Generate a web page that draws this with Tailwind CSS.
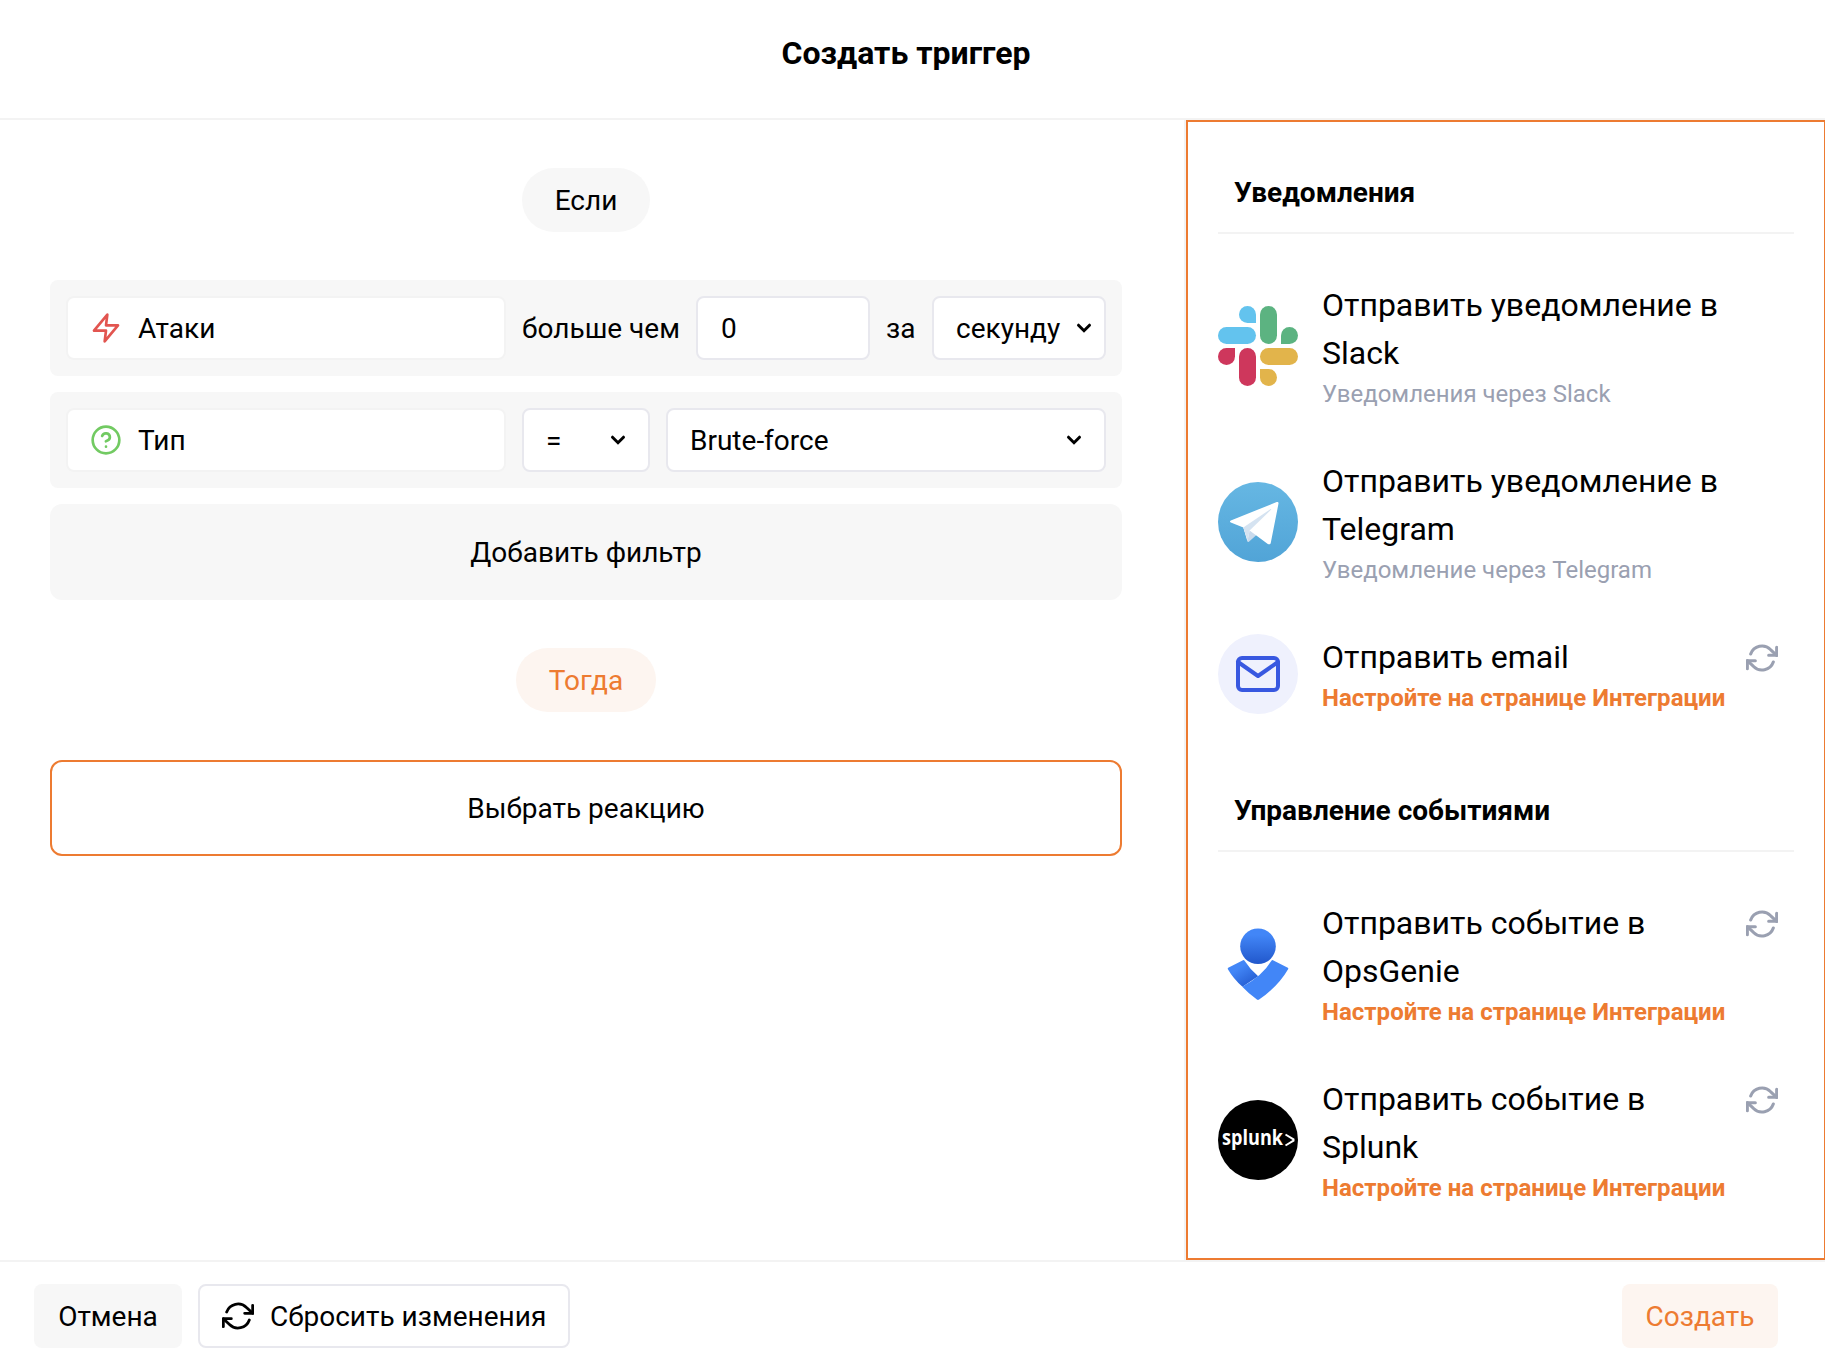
<!DOCTYPE html>
<html lang="ru">
<head>
<meta charset="utf-8">
<title>Создать триггер</title>
<script src="https://cdn.jsdelivr.net/npm/@tailwindcss/browser@4"></script>
</head>
<body class="bg-white">
<svg class="hidden">
  <symbol id="refresh" viewBox="0 0 24 24"><g fill="none" stroke="currentColor" stroke-linecap="round" stroke-linejoin="round"><path d="M23 4v6h-6M1 20v-6h6"/><path d="M3.51 9a9 9 0 0 1 14.85-3.36L23 10M1 14l4.64 4.36A9 9 0 0 0 20.49 15"/></g></symbol>
  <symbol id="chevron" viewBox="0 0 16 10"><path d="M2.5 2.2 8 7.7l5.500-5.500" fill="none" stroke="currentColor" stroke-width="3" stroke-linecap="round" stroke-linejoin="miter"/></symbol>
</svg>
<div class="flex h-[1364px] w-[1825px] flex-col overflow-hidden bg-white font-[Roboto,sans-serif] text-[28px] leading-[40px] text-black">
  <header class="flex h-[120px] shrink-0 items-start justify-center border-b-2 border-[#f3f3f3] pt-[33px] pr-[13px]">
    <h1 class="text-[32px] leading-[40px] font-bold">Создать триггер</h1>
  </header>

  <div class="flex h-[1140px] shrink-0">
    <main class="flex w-[1186px] shrink-0 flex-col items-center border-r-2 border-[#f3f3f3] pt-12 pr-[62px] pl-[50px]">
      <div class="flex h-16 w-32 items-center justify-center rounded-full bg-[#f7f7f7] pt-0.5">Если</div>

      <section class="mt-12 flex w-full flex-col gap-4">
        <div class="flex h-24 items-center gap-4 rounded-lg bg-[#f7f7f7] px-4">
          <div class="flex h-16 w-[440px] shrink-0 items-center gap-4 rounded-lg border-2 border-[#f3f3f3] bg-white px-[22px]">
            <svg class="size-8 text-[#e25550]" viewBox="0 0 24 24" fill="none" stroke="currentColor" stroke-width="2" stroke-linecap="round" stroke-linejoin="round"><path d="M13 2 3 14h9l-1 8 10-12h-9z"/></svg>
            <span class="pt-0.5">Атаки</span>
          </div>
          <span class="grow pt-0.5 whitespace-nowrap">больше чем</span>
          <div class="flex h-16 w-[174px] shrink-0 items-center rounded-lg border-2 border-[#e8e8ee] bg-white px-[23px] pt-0.5">0</div>
          <span class="w-[30px] shrink-0 pt-0.5">за</span>
          <div class="flex h-16 w-[174px] shrink-0 items-center justify-between rounded-lg border-2 border-[#e8e8ee] bg-white pr-3 pl-[22px]">
            <span class="pt-0.5">секунду</span><svg class="h-[10px] w-4"><use href="#chevron"/></svg>
          </div>
        </div>

        <div class="flex h-24 items-center gap-4 rounded-lg bg-[#f7f7f7] px-4">
          <div class="flex h-16 w-[440px] shrink-0 items-center gap-4 rounded-lg border-2 border-[#f3f3f3] bg-white px-[22px]">
            <svg class="size-8 text-[#72ca62]" viewBox="0 0 24 24" fill="none" stroke="currentColor" stroke-width="2" stroke-linecap="round" stroke-linejoin="round"><circle cx="12" cy="12" r="10"/><path d="M9.090 9a3 3 0 0 1 5.830 1c0 2-3 3-3 3M12 17h.01"/></svg>
            <span class="pt-0.5">Тип</span>
          </div>
          <div class="flex h-16 w-32 shrink-0 items-center justify-between rounded-lg border-2 border-[#e8e8ee] bg-white px-[22px]">
            <span class="pt-0.5">=</span><svg class="h-[10px] w-4"><use href="#chevron"/></svg>
          </div>
          <div class="flex h-16 w-[440px] shrink-0 items-center justify-between rounded-lg border-2 border-[#e8e8ee] bg-white px-[22px]">
            <span class="pt-0.5">Brute-force</span><svg class="h-[10px] w-4"><use href="#chevron"/></svg>
          </div>
        </div>

        <button class="h-24 rounded-xl bg-[#f7f7f7] pt-0.5">Добавить фильтр</button>
      </section>

      <div class="mt-12 flex h-16 w-[140px] items-center justify-center rounded-full bg-[#fdf5f0] pt-0.5 text-[#ed7b31]">Тогда</div>
      <button class="mt-12 h-24 w-full rounded-xl border-2 border-[#ed7b31] pt-0.5">Выбрать реакцию</button>
    </main>

    <aside class="w-[640px] shrink-0 border-2 border-[#ed7b31] px-[30px]">
      <h2 class="flex h-28 items-end border-b-2 border-[#f3f3f3] px-4 pb-[19px] font-bold">Уведомления</h2>
      <ul class="mt-[46px] flex flex-col gap-11">
        <li class="flex items-center">
          <svg class="size-20 shrink-0" viewBox="0 0 80 80">
            <g fill="#63c3ee"><path d="M29.500 0a8.500 8.500 0 0 1 8.500 8.500V17h-8.500a8.500 8.500 0 0 1 0-17z"/><rect y="21" width="38" height="17" rx="8.500"/></g>
            <g fill="#5cb381"><rect x="42" width="17" height="38" rx="8.500"/><path d="M63 38v-8.500a8.500 8.500 0 1 1 8.500 8.500z"/></g>
            <g fill="#ce375c"><path d="M17 42v8.500A8.500 8.500 0 1 1 8.500 42z"/><rect x="21" y="42" width="17" height="38" rx="8.500"/></g>
            <g fill="#e2b44b"><rect x="42" y="42" width="38" height="17" rx="8.500"/><path d="M42 63h8.500a8.500 8.500 0 1 1-8.500 8.500z"/></g>
          </svg>
          <div class="ml-6 w-[420px]">
            <div class="-mb-px pt-px text-[32px] leading-[48px]">Отправить уведомление в Slack</div>
            <div class="text-2xl leading-9 text-[#9aa0b1]">Уведомления через Slack</div>
          </div>
        </li>
        <li class="flex items-center">
          <svg class="size-20 shrink-0" viewBox="0 0 80 80">
            <defs><linearGradient id="tg" x1="0" y1="0" x2="0" y2="1"><stop stop-color="#66b7e3"/><stop offset="1" stop-color="#51a4d7"/></linearGradient></defs>
            <circle cx="40" cy="40" r="40" fill="url(#tg)"/>
            <path d="m25.300 45 4 14.300c.2.800 1 .9 1.600.4L38.500 53 33 47z" fill="#c9daec"/>
            <path d="M12.800 38.600 58.700 20c1.200-.4 2 .3 1.800 1.600L52.800 60.800c-.3 1.600-1.700 2-3 1.100L31.600 48.500l-2.100 10.300-4.200-13.300-12.500-5c-1.100-.5-1.100-1.400 0-1.900z" fill="#fff"/>
            <path d="m25.300 45.500 27.400-18.400c.5-.2.700.2.300.6L31.600 48.500l-1.900 10.300z" fill="#d5e3f1"/>
          </svg>
          <div class="ml-6 w-[420px]">
            <div class="-mb-px pt-px text-[32px] leading-[48px]">Отправить уведомление в Telegram</div>
            <div class="text-2xl leading-9 text-[#9aa0b1]">Уведомление через Telegram</div>
          </div>
        </li>
        <li class="flex items-center">
          <div class="flex size-20 shrink-0 items-center justify-center rounded-full bg-[#eff1fd]">
            <svg class="size-12 text-[#3858e0]" viewBox="0 0 24 24" fill="none" stroke="currentColor" stroke-width="2" stroke-linecap="round" stroke-linejoin="round"><path d="M4 4h16c1.100 0 2 .9 2 2v12c0 1.100-.9 2-2 2H4c-1.100 0-2-.9-2-2V6c0-1.100.9-2 2-2z"/><path d="m22 6-10 7L2 6"/></svg>
          </div>
          <div class="ml-6 w-[424px]">
            <div class="-mb-px pt-px text-[32px] leading-[48px]">Отправить email</div>
            <div class="text-2xl leading-9 font-bold tracking-[0.02px] whitespace-nowrap text-[#ed7b31]">Настройте на странице Интеграции</div>
          </div>
          <svg class="mt-[10px] size-8 shrink-0 self-start stroke-[2.3] text-[#9aa0b1]"><use href="#refresh"/></svg>
        </li>
      </ul>

      <h2 class="mt-[24px] flex h-28 items-end border-b-2 border-[#f3f3f3] px-4 pb-[19px] font-bold">Управление событиями</h2>
      <ul class="mt-[46px] flex flex-col gap-11">
        <li class="flex items-center">
          <svg class="size-20 shrink-0" viewBox="0 0 80 80">
            <defs>
              <linearGradient id="og1" x1="0" y1="0" x2="0" y2="1"><stop offset=".18" stop-color="#4286f7"/><stop offset="1" stop-color="#2157cb"/></linearGradient>
              <linearGradient id="og2" x1=".3" y1=".35" x2=".7" y2=".9"><stop stop-color="#4286f7"/><stop offset="1" stop-color="#2760d4"/></linearGradient>
            </defs>
            <circle cx="40" cy="22.300" r="17.800" fill="url(#og1)"/>
            <path d="M10.200 43.800 25 36.200q.9-.4 1.400.4Q32 45.500 40.200 52.300L24.500 62.800Q15.400 54.800 9.900 45.200q-.5-.9.300-1.400z" fill="url(#og2)"/>
            <path d="M69.800 43.800 55 36.200q-.9-.4-1.400.4Q44 52.500 24.300 62.700q6.500 7 14.600 12.800 1.100.8 2.200 0Q60 62.500 70.100 45.200q.5-.9-.3-1.400z" fill="#4286f7"/>
          </svg>
          <div class="ml-6 w-[424px]">
            <div class="-mb-px w-[400px] pt-px text-[32px] leading-[48px]">Отправить событие в OpsGenie</div>
            <div class="text-2xl leading-9 font-bold tracking-[0.02px] whitespace-nowrap text-[#ed7b31]">Настройте на странице Интеграции</div>
          </div>
          <svg class="mt-[10px] size-8 shrink-0 self-start stroke-[2.3] text-[#9aa0b1]"><use href="#refresh"/></svg>
        </li>
        <li class="flex items-center">
          <svg class="size-20 shrink-0" viewBox="0 0 80 80">
            <circle cx="40" cy="40" r="40"/>
            <text x="4" y="45.300" textLength="61" lengthAdjust="spacingAndGlyphs" class="fill-white font-['Open_Sans',sans-serif] text-[20.5px] font-bold">splunk</text>
            <path d="m67.500 34.500 8 4.800v1.400l-8 4.800" fill="none" stroke="#fff" stroke-width="2"/>
          </svg>
          <div class="ml-6 w-[424px]">
            <div class="-mb-px w-[400px] pt-px text-[32px] leading-[48px]">Отправить событие в<br>Splunk</div>
            <div class="text-2xl leading-9 font-bold tracking-[0.02px] whitespace-nowrap text-[#ed7b31]">Настройте на странице Интеграции</div>
          </div>
          <svg class="mt-[10px] size-8 shrink-0 self-start stroke-[2.3] text-[#9aa0b1]"><use href="#refresh"/></svg>
        </li>
      </ul>
    </aside>
  </div>

  <footer class="flex h-[104px] shrink-0 items-start gap-4 border-t-2 border-[#f3f3f3] pt-[22px] pr-[47px] pl-[34px]">
    <button class="h-16 w-[148px] rounded-lg bg-[#f7f7f7] pt-0.5">Отмена</button>
    <button class="flex h-16 w-[372px] items-center gap-4 rounded-lg border-2 border-[#e8e8ee] px-[22px] whitespace-nowrap"><svg class="size-8 shrink-0 stroke-[2.1]"><use href="#refresh"/></svg><span class="pt-0.5">Сбросить изменения</span></button>
    <button class="ml-auto h-16 w-[156px] rounded-lg bg-[#fdf5f0] pt-0.5 text-[#ed7b31]">Создать</button>
  </footer>
</div>
</body>
</html>
